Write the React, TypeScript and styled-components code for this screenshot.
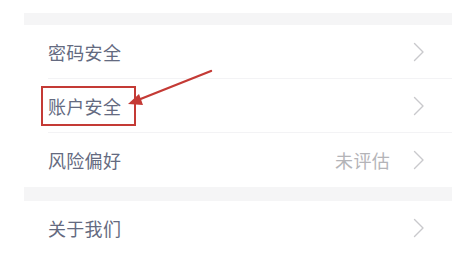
import React from "react";
import styled, { createGlobalStyle } from "styled-components";

const GlobalStyle = createGlobalStyle`
  html, body {
    margin: 0;
    padding: 0;
    background: #ffffff;
  }
  body {
    font-family: "Noto Sans CJK SC", "Noto Sans", sans-serif;
    overflow: hidden;
  }
`;

const Page = styled.div`
  width: 452px;
  height: 253px;
  padding-top: 13px;
  box-sizing: border-box;
  position: relative;
  overflow: hidden;
`;

const List = styled.div`
  margin-left: 24px;
  display: flex;
  flex-direction: column;
`;

const Gap = styled.div<{ $h: number }>`
  height: ${(p) => p.$h}px;
  background: #f5f5f6;
`;

const Row = styled.div<{ $divider?: boolean }>`
  height: 54px;
  display: flex;
  align-items: center;
  padding: 0 27px 0 24px;
  position: relative;

  ${(p) =>
    p.$divider &&
    `
    &::after {
      content: "";
      position: absolute;
      left: 24px;
      right: 0;
      bottom: 0;
      height: 1px;
      background: #f3f3f5;
    }
  `}
`;

const Label = styled.span<{ $marked?: boolean }>`
  flex: 1;
  font-size: 18px;
  line-height: 20px;
  color: #646a80;
  letter-spacing: 0.3px;
  position: relative;

  ${(p) =>
    p.$marked &&
    `
    &::after {
      content: "";
      position: absolute;
      left: -7px;
      top: -10px;
      width: 95px;
      height: 40px;
      box-sizing: border-box;
      border: 2px solid #c43a35;
    }
  `}
`;

const Value = styled.span`
  font-size: 18px;
  color: #b4b4b8;
  margin-right: 23px;
  letter-spacing: 0.3px;
`;

const Arrow = styled.svg`
  position: absolute;
  left: 0;
  top: 0;
  pointer-events: none;
`;

const Chevron = () => (
  <svg width="12" height="20" viewBox="0 0 12 20">
    <path
      d="M1.5 1.5 L10 10 L1.5 18.5"
      fill="none"
      stroke="#c9c9cc"
      strokeWidth="1.4"
      strokeLinecap="round"
      strokeLinejoin="round"
    />
  </svg>
);

const App: React.FC = () => {
  return (
    <>
      <GlobalStyle />
      <Page>
        <List>
          <Gap $h={12} />
          <Row $divider>
            <Label>密码安全</Label>
            <Chevron />
          </Row>
          <Row $divider>
            <Label $marked>账户安全</Label>
            <Chevron />
          </Row>
          <Row>
            <Label>风险偏好</Label>
            <Value>未评估</Value>
            <Chevron />
          </Row>
          <Gap $h={14} />
          <Row>
            <Label>关于我们</Label>
            <Chevron />
          </Row>
        </List>
        <Arrow width="452" height="253" viewBox="0 0 452 253">
          <line
            x1="211"
            y1="71"
            x2="138"
            y2="100"
            stroke="#c43a35"
            strokeWidth="2.4"
            strokeLinecap="round"
          />
          <polygon points="128,104 139,94 143,105" fill="#c43a35" />
        </Arrow>
      </Page>
    </>
  );
};

export default App;
